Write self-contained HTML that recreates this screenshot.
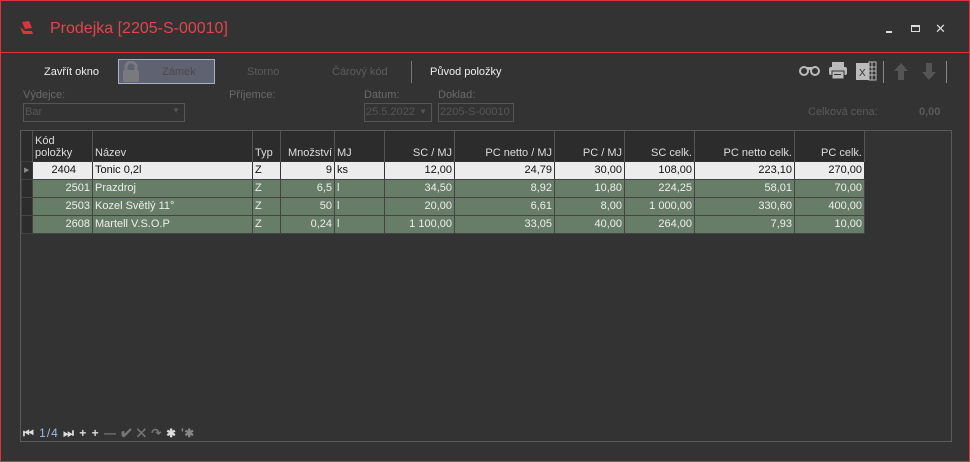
<!DOCTYPE html>
<html><head><meta charset="utf-8"><style>
*{margin:0;padding:0;box-sizing:border-box}
body{width:970px;height:462px;background:#333;font-family:"Liberation Sans",sans-serif;font-size:11px;color:#eee;position:relative;overflow:hidden}
.win{position:absolute;left:0;top:0;width:970px;height:462px;border:1px solid #d8363c}
.sep{position:absolute;left:0;top:52px;width:970px;height:1px;background:#d8363c}
.abs{position:absolute;white-space:nowrap}
.title{left:50px;top:20px;font-size:16px;color:#e2454a}
.dim{color:#6a6a6a}
.grid{position:absolute;left:20px;top:130px;width:932px;height:312px;border:1px solid #5a5a5a;background:#333}
table{border-collapse:collapse;position:absolute;left:0;top:0;table-layout:fixed}
td{height:18px;padding:0 2px;border:1px solid #4a4a4a;white-space:nowrap;overflow:hidden;font-size:11px}
th{height:30px;font-weight:normal;vertical-align:bottom;padding:0 2px 2px;border-right:1px solid #555;text-align:left;background:#2c2c2c;color:#ddd;line-height:12px}
.r{text-align:right}
tr.g td{background:#687d68;color:#eee;border-color:#444}
tr.s td{background:#ececec;color:#111;border:1px dotted #333}
td.ind{background:#2c2c2c !important;border-color:#444 !important}
</style></head><body>
<div class="win"></div><div class="sep"></div>
<svg class="abs" style="left:19px;top:21px" width="16" height="14"><path d="M3 1 L10 0 L13 7 L6 8Z" fill="#d8363c"/><path d="M1 6 L6 10 L13 10 L14 13 L4 13Z" fill="#d8363c"/></svg>
<div class="abs title">Prodejka [2205-S-00010]</div>
<div class="abs" style="left:886px;top:31px;width:6px;height:2px;background:#ddd"></div>
<div class="abs" style="left:911px;top:25px;width:9px;height:7px;border:1px solid #ddd;border-top-width:2px"></div>
<div class="abs" style="left:935px;top:21px;font-size:13px;color:#ddd">✕</div>

<div class="abs" style="left:44px;top:66px;color:#eee">Zavřít okno</div>
<div class="abs" style="left:118px;top:59px;width:97px;height:25px;background:#5f6270;border:1px solid #a9b0c8"></div>
<svg class="abs" style="left:121px;top:61px" width="20" height="22"><rect x="2" y="9" width="16" height="12" rx="2" fill="#7a7a7e"/><path d="M5 10 V6 a5 5 0 0 1 10 0 V10" stroke="#7a7a7e" stroke-width="3" fill="none"/></svg>
<div class="abs" style="left:162px;top:66px;color:#4a4a4a">Zámek</div>
<div class="abs" style="left:247px;top:66px;color:#5c5c5c">Storno</div>
<div class="abs" style="left:332px;top:66px;color:#5c5c5c">Čárový kód</div>
<div class="abs" style="left:411px;top:61px;width:1px;height:22px;background:#777"></div>
<div class="abs" style="left:430px;top:66px">Původ položky</div>

<svg class="abs" style="left:799px;top:64px" width="22" height="12"><circle cx="5" cy="7" r="4" fill="none" stroke="#bbb" stroke-width="2"/><circle cx="16" cy="7" r="4" fill="none" stroke="#bbb" stroke-width="2"/><rect x="8" y="3" width="5" height="3" fill="#bbb"/></svg>
<svg class="abs" style="left:828px;top:61px" width="20" height="19"><rect x="4" y="1" width="12" height="5" fill="#bbb"/><rect x="1" y="6" width="18" height="8" rx="2" fill="#bbb"/><rect x="4" y="10" width="12" height="8" fill="#bbb" stroke="#333"/><rect x="6" y="13" width="7" height="1" fill="#333"/></svg>
<svg class="abs" style="left:856px;top:61px" width="22" height="20"><rect x="0" y="2" width="13" height="17" fill="#bbb"/><text x="3" y="15" font-size="10" fill="#333" font-family="Liberation Sans">X</text><rect x="13" y="1" width="7" height="18" fill="none" stroke="#bbb"/><path d="M13 6h7M13 10h7M13 14h7M16 1v18" stroke="#bbb"/></svg>
<div class="abs" style="left:883px;top:61px;width:1px;height:22px;background:#888"></div>
<svg class="abs" style="left:893px;top:62px" width="16" height="19"><path d="M8 1 L15 9 H11 V18 H5 V9 H1Z" fill="#555"/></svg>
<svg class="abs" style="left:921px;top:62px" width="16" height="19"><path d="M8 18 L15 10 H11 V1 H5 V10 H1Z" fill="#555"/></svg>
<div class="abs" style="left:946px;top:61px;width:1px;height:22px;background:#888"></div>

<div class="abs dim" style="left:23px;top:89px">Výdejce:</div>
<div class="abs" style="left:23px;top:103px;width:162px;height:19px;border:1px solid #555;color:#555;padding:2px 1px">Bar<span style="position:absolute;right:4px;top:2px;font-size:8px">▼</span></div>
<div class="abs dim" style="left:229px;top:89px">Příjemce:</div>
<div class="abs dim" style="left:364px;top:89px">Datum:</div>
<div class="abs" style="left:364px;top:103px;width:68px;height:19px;border:1px solid #555;color:#555;padding:2px 1px">25.5.2022<span style="position:absolute;right:4px;top:3px;font-size:8px">▼</span></div>
<div class="abs dim" style="left:438px;top:89px">Doklad:</div>
<div class="abs" style="left:438px;top:103px;width:76px;height:19px;border:1px solid #555;color:#555;padding:2px 1px">2205-S-00010</div>
<div class="abs" style="left:808px;top:106px;color:#5a5a5a">Celková cena:</div>
<div class="abs" style="left:919px;top:106px;color:#5a5a5a;font-weight:bold">0,00</div>

<div class="grid">
<table>
<colgroup><col style="width:11px"><col style="width:60px"><col style="width:160px"><col style="width:28px"><col style="width:54px"><col style="width:50px"><col style="width:70px"><col style="width:100px"><col style="width:70px"><col style="width:70px"><col style="width:100px"><col style="width:70px"></colgroup>
<tr><th></th><th>Kód<br>položky</th><th>Název</th><th>Typ</th><th class="r">Množství</th><th>MJ</th><th class="r">SC / MJ</th><th class="r">PC netto / MJ</th><th class="r">PC / MJ</th><th class="r">SC celk.</th><th class="r">PC netto celk.</th><th class="r">PC celk.</th></tr>
<tr class="s"><td class="ind" style="color:#888;font-size:7px">▶</td><td class="r" style="padding-right:16px">2404</td><td>Tonic 0,2l</td><td>Z</td><td class="r">9</td><td>ks</td><td class="r">12,00</td><td class="r">24,79</td><td class="r">30,00</td><td class="r">108,00</td><td class="r">223,10</td><td class="r">270,00</td></tr>
<tr class="g"><td class="ind"></td><td class="r">2501</td><td>Prazdroj</td><td>Z</td><td class="r">6,5</td><td>l</td><td class="r">34,50</td><td class="r">8,92</td><td class="r">10,80</td><td class="r">224,25</td><td class="r">58,01</td><td class="r">70,00</td></tr>
<tr class="g"><td class="ind"></td><td class="r">2503</td><td>Kozel Světlý 11°</td><td>Z</td><td class="r">50</td><td>l</td><td class="r">20,00</td><td class="r">6,61</td><td class="r">8,00</td><td class="r">1 000,00</td><td class="r">330,60</td><td class="r">400,00</td></tr>
<tr class="g"><td class="ind"></td><td class="r">2608</td><td>Martell V.S.O.P</td><td>Z</td><td class="r">0,24</td><td>l</td><td class="r">1 100,00</td><td class="r">33,05</td><td class="r">40,00</td><td class="r">264,00</td><td class="r">7,93</td><td class="r">10,00</td></tr>
</table>
<div class="abs" style="left:2px;top:295px;font-size:12px;color:#ddd;letter-spacing:1px;font-weight:bold">⏮ <span style="color:#9bbbe0;font-weight:normal">1/4</span> ⏭ + + <span style="color:#777">— ✔ ✕ ↷</span> ✱ <span style="color:#888">'✱</span></div>
</div>
</body></html>
